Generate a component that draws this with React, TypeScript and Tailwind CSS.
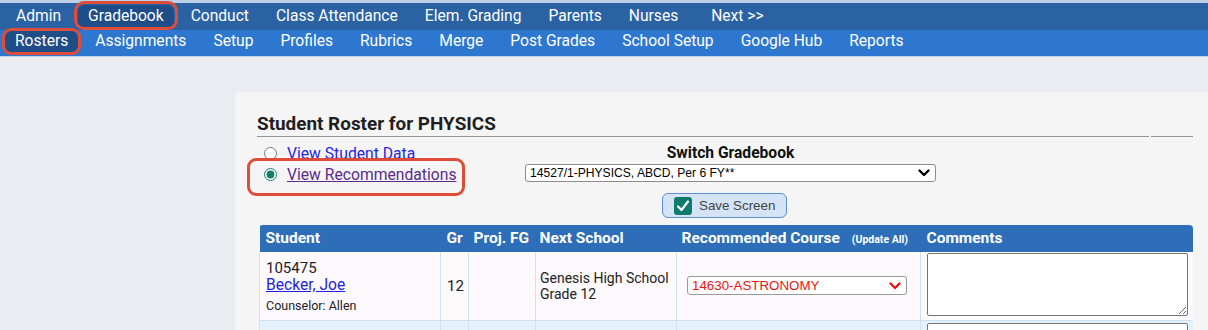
import React from "react";

const topNav = ["Admin", "Gradebook", "Conduct", "Class Attendance", "Elem. Grading", "Parents", "Nurses", "Next >>"];
const subNav = ["Rosters", "Assignments", "Setup", "Profiles", "Rubrics", "Merge", "Post Grades", "School Setup", "Google Hub", "Reports"];

const Chevron: React.FC<{ className?: string }> = ({ className }) => (
  <svg width="12" height="8" viewBox="0 0 12 8" className={className}>
    <polyline points="1.5,1.5 6,6 10.5,1.5" fill="none" stroke="currentColor" strokeWidth="2.4" strokeLinecap="round" strokeLinejoin="round" />
  </svg>
);

const App: React.FC = () => {
  return (
    <div className="min-h-[330px] bg-[#eaecf1] font-['Roboto',sans-serif] text-[#222]">
      {/* top strip */}
      <div className="h-[3px] bg-[#bdd0e8]" />

      {/* main menu */}
      <div className="flex h-[27px] items-center gap-[7px] bg-[#2a62a3] pl-[6px] text-[15.6px] text-white">
        {topNav.map((item) =>
          item === "Gradebook" ? (
            <div key={item} className="relative flex h-[24px] items-center rounded-[7px] bg-[#1e4d88] px-[10px]">
              {item}
              <span className="pointer-events-none absolute -inset-x-[4px] -top-[4px] -bottom-[1px] z-10 rounded-[10px] border-[3px] border-[#df4c38]" />
            </div>
          ) : (
            <div key={item} className={item === "Next >>" ? "ml-[6px] flex h-[24px] items-center px-[10px]" : "flex h-[24px] items-center px-[10px]"}>
              {item}
            </div>
          )
        )}
      </div>

      {/* sub menu */}
      <div className="flex h-[26px] items-start gap-[7px] bg-[#2e77d0] pl-[5px] pt-[1px] text-[15.6px] text-white">
        {subNav.map((item) =>
          item === "Rosters" ? (
            <div key={item} className="relative flex h-[21px] items-center rounded-[6px] bg-[#1e4d88] px-[10px]">
              {item}
              <span className="pointer-events-none absolute -inset-[3px] z-10 rounded-[9px] border-[3px] border-[#df4c38]" />
            </div>
          ) : (
            <div key={item} className="flex h-[21px] items-center px-[10px]">
              {item}
            </div>
          )
        )}
      </div>
      <div className="h-[1px] bg-[#c2d4ea]" />

      <div className="flex pl-[235px] pt-[35px]">
        <div className="flex-1 rounded-tl-[5px] bg-[#f5f5f5] pl-[22px] pt-[21px]">
          <div className="w-[936px]">
            {/* title */}
            <div className="flex gap-[2px]">
              <div className="flex-1 border-b border-[#959595] pb-[1px] text-[18.9px] font-bold leading-[22px] text-[#1e1e1e]">
                Student Roster for PHYSICS
              </div>
              <div className="w-[42px] border-b border-[#959595]" />
            </div>

            {/* view options + switch gradebook */}
            <div className="mt-[6px] flex">
              <div className="w-[268px] pl-[7px] text-[15.7px]">
                <label className="flex h-[21px] items-center gap-[10px]">
                  <input type="radio" name="view" className="m-0 h-[13px] w-[13px] accent-[#13806f]" />
                  <a href="#" className="text-[#2626e6] underline">View Student Data</a>
                </label>
                <label className="relative flex h-[21px] w-fit items-center gap-[10px]">
                  <input type="radio" name="view" defaultChecked className="m-0 h-[13px] w-[13px] accent-[#13806f]" />
                  <a href="#" className="text-[#5e2a8c] underline">View Recommendations</a>
                  <span className="pointer-events-none absolute -left-[17px] -right-[9px] -top-[6px] -bottom-[11px] rounded-[9px] border-[3px] border-[#df4c38]" />
                </label>
              </div>
              <div className="flex w-[411px] flex-col items-center">
                <div className="text-[15.6px] font-bold leading-[20px] text-[#111]">Switch Gradebook</div>
                <div className="relative mt-[1px] w-[411px]">
                  <select className="block h-[18px] w-full appearance-none rounded-[3px] border border-[#8d8d8d] bg-white pl-[4px] font-['Liberation_Sans',Arial,sans-serif] text-[12.1px] leading-[16px] text-black">
                    <option>14527/1-PHYSICS, ABCD, Per 6 FY**</option>
                  </select>
                  <Chevron className="pointer-events-none absolute right-[6px] top-[5px] text-black" />
                </div>
              </div>
            </div>

            {/* save */}
            <div className="mt-[8px] pl-[405px]">
              <button className="flex h-[25px] w-[125px] items-center gap-[7px] rounded-[6px] border border-[#5d8fd4] bg-[#d4e3f5] pl-[11px] font-['Liberation_Sans',Arial,sans-serif] text-[13.33px] text-[#444]">
                <svg width="18" height="18" viewBox="0 0 18 18">
                  <rect width="18" height="18" rx="3" fill="#0e7b6c" />
                  <path d="M4 9.5 L7.5 13 L14 4.5" stroke="white" strokeWidth="2.2" fill="none" strokeLinecap="round" strokeLinejoin="round" />
                </svg>
                Save Screen
              </button>
            </div>

            {/* roster table */}
            <div className="ml-[2px] mt-[7px] w-[934px] overflow-hidden rounded-t-[4px]">
              <table className="w-[934px] table-fixed border-collapse">
                <colgroup>
                  <col className="w-[181px]" />
                  <col className="w-[28px]" />
                  <col className="w-[67px]" />
                  <col className="w-[141px]" />
                  <col className="w-[244px]" />
                  <col className="w-[273px]" />
                </colgroup>
                <thead>
                  <tr className="h-[27px] bg-[#2e6db8] text-[15.5px] font-bold text-white">
                    <th className="px-[6px] text-left font-bold">Student</th>
                    <th className="px-[6px] text-left font-bold">Gr</th>
                    <th className="px-[5px] text-left font-bold whitespace-nowrap">Proj. FG</th>
                    <th className="px-[4px] text-left font-bold">Next School</th>
                    <th className="px-[5px] text-left font-bold whitespace-nowrap">
                      Recommended Course
                      <span className="ml-[12px] text-[10.5px]">(Update All)</span>
                    </th>
                    <th className="px-[6px] text-left font-bold">Comments</th>
                  </tr>
                </thead>
                <tbody>
                  <tr className="h-[68px] bg-[#fdf9fd]">
                    <td className="border-x border-b border-[#cfe0f3] pl-[6px] pt-[8px] align-top">
                      <div className="text-[15px] leading-[17px]">105475</div>
                      <a href="#" className="block text-[15.6px] leading-[17px] text-[#1f1fe0] underline">Becker, Joe</a>
                      <div className="mt-[4px] text-[12.5px] leading-[16px]">Counselor: Allen</div>
                    </td>
                    <td className="border-x border-b border-[#cfe0f3] pl-[6px] align-middle text-[15px]">12</td>
                    <td className="border-x border-b border-[#cfe0f3]" />
                    <td className="border-x border-b border-[#cfe0f3] pl-[4px] align-middle text-[14px] leading-[16px]">
                      Genesis High School
                      <br />
                      Grade 12
                    </td>
                    <td className="border-x border-b border-[#cfe0f3] pl-[10px] align-middle">
                      <div className="relative w-[220px]">
                        <select className="block h-[19px] w-full appearance-none rounded-[3px] border border-[#9a9a9a] bg-white pl-[4px] font-['Liberation_Sans',Arial,sans-serif] text-[13.33px] leading-[17px] text-[#ee1313]">
                          <option>14630-ASTRONOMY</option>
                        </select>
                        <Chevron className="pointer-events-none absolute right-[6px] top-[6px] text-[#ee1313]" />
                      </div>
                    </td>
                    <td className="border-x border-b border-[#cfe0f3] pl-[6px] pt-[1px] align-top">
                      <textarea className="block h-[63px] w-[261px] rounded-[2px] border border-[#767676] bg-white" />
                    </td>
                  </tr>
                  <tr className="h-[68px] bg-[#e6f1fa]">
                    <td className="border-x border-[#cfe0f3]" />
                    <td className="border-x border-[#cfe0f3]" />
                    <td className="border-x border-[#cfe0f3]" />
                    <td className="border-x border-[#cfe0f3]" />
                    <td className="border-x border-[#cfe0f3]" />
                    <td className="border-x border-[#cfe0f3] pl-[6px] pt-[2px] align-top">
                      <textarea className="block h-[63px] w-[261px] rounded-[2px] border border-[#767676] bg-white" />
                    </td>
                  </tr>
                </tbody>
              </table>
            </div>
          </div>
        </div>
      </div>
    </div>
  );
};

export default App;
